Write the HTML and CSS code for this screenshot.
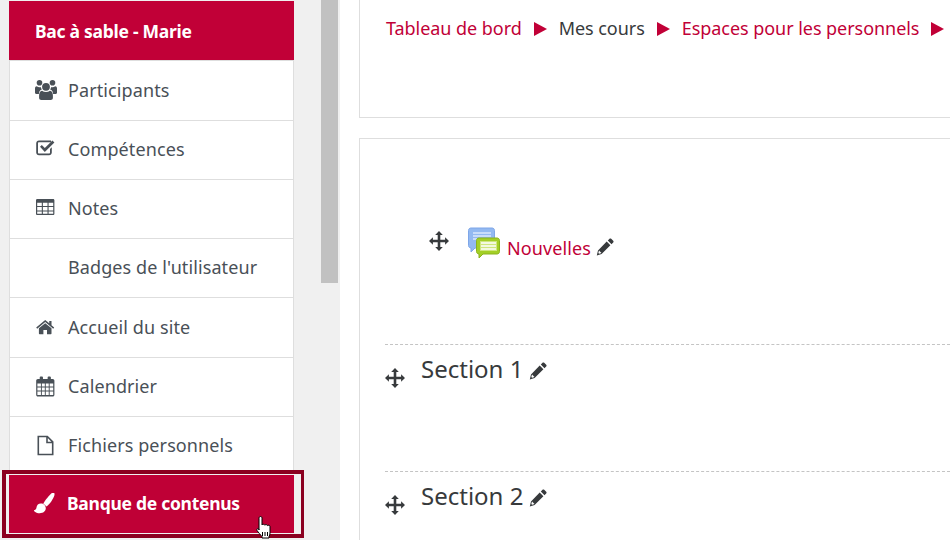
FILE: index.html
```html
<!DOCTYPE html>
<html lang="fr">
<head>
    <meta charset="UTF-8">
    <title>Bac à sable - Marie</title>
    <link rel="stylesheet" href="styles.css">
</head>
<body>
    <div class="page">
        <!-- Course navigation -->
        <nav class="sidebar">
            <a class="nav-head">Bac à sable - Marie</a>
            <a class="nav-item first">
                <svg class="ico" viewBox="0 0 22 22">
                    <circle cx="11" cy="7.800" r="3.900"/><circle cx="4.500" cy="3.800" r="2.800"/><circle cx="17.500" cy="3.800" r="2.800"/>
                    <path d="M0 9.500C0 8 .8 7.200 1.800 7.200c.8.700 1.700 1.100 2.700 1.100.5 0 .9-.1 1.200-.2.200 1 .6 1.800 1.200 2.500C5 11.200 4 12.700 3.900 15H1.200C.5 15 0 14.500 0 13.800zM22 9.500c0-1.500-.8-2.300-1.800-2.300-.8.700-1.700 1.100-2.700 1.100-.5 0-.9-.1-1.200-.2-.2 1-.6 1.800-1.200 2.500 1.900.6 2.900 2.100 3 4.400h2.700c.7 0 1.200-.5 1.200-1.200z"/>
                    <path d="M7 11.700c2.300 1.700 5.700 1.700 8 0 1.900.2 2.900 2.100 2.900 4.800v2.200c0 1.300-1 2.300-2.200 2.300H6.300c-1.200 0-2.200-1-2.200-2.300v-2.200c0-2.700 1-4.600 2.900-4.800z"/>
                </svg>
                <span class="label">Participants</span>
            </a>
            <a class="nav-item">
                <svg class="ico" viewBox="0 0 22 22">
                    <g transform="translate(1 .5)"><path d="M3 1h12v1.800H3c-.6 0-1 .4-1 1V13c0 .6.400 1 1 1h10c.6 0 1-.4 1-1V9.500l1.800-1.800V13c0 1.600-1.200 2.800-2.800 2.800H3C1.400 15.800.2 14.600.2 13V3.800C.2 2.200 1.400 1 3 1z"/><path d="M4 7.200l1.800-1.800 3 3L16.400 1l2 2-9.600 9.500z"/></g>
                </svg>
                <span class="label">Compétences</span>
            </a>
            <a class="nav-item">
                <svg class="ico" viewBox="0 0 22 22">
                    <path transform="translate(1 1) scale(.92 1)" fill-rule="evenodd" d="M1.300 0h17.400c.7 0 1.300.6 1.300 1.300v13.400c0 .7-.6 1.300-1.300 1.300H1.300C.6 16 0 15.400 0 14.700V1.300C0 .6.600 0 1.300 0zm0 3.700V7h5V3.700zm6.200 0V7h5V3.700zm6.200 0V7h5V3.700zM1.300 8.100v3.300h5V8.100zm6.200 0v3.300h5V8.100zm6.200 0v3.300h5V8.100zM1.300 12.500v2.200h5v-2.200zm6.200 0v2.200h5v-2.200zm6.200 0v2.200h5v-2.200z"/>
                </svg>
                <span class="label">Notes</span>
            </a>
            <a class="nav-item">
                <span class="ico"></span>
                <span class="label">Badges de l'utilisateur</span>
            </a>
            <a class="nav-item">
                <svg class="ico" viewBox="0 0 22 22">
                    <g transform="translate(1.200 3) scale(.9)"><path d="M10 3.500L3 9.300V15c0 .4.300.7.700.7h4.300v-4.500h4v4.500h4.300c.4 0 .7-.3.700-.7V9.300z"/><path d="M10 0L0 8.300l1.100 1.300L10 2.200l8.900 7.400L20 8.300l-3-2.500V1h-2.500v2.700z"/></g>
                </svg>
                <span class="label">Accueil du site</span>
            </a>
            <a class="nav-item">
                <svg class="ico" viewBox="0 0 22 22">
                    <path transform="translate(1 .5) scale(.93 1)" fill-rule="evenodd" d="M5 0h1.500c.6 0 1 .4 1 1v1.500h5V1c0-.6.4-1 1-1H15c.6 0 1 .4 1 1v1.500h2c1 0 1.800.8 1.800 1.800v13.900c0 1-.8 1.800-1.800 1.800H2c-1 0-1.800-.8-1.800-1.800V4.300c0-1 .8-1.800 1.800-1.800h2V1c0-.6.4-1 1-1zM1.500 7v3h3.800V7zm4.800 0v3h3.200V7zm4.200 0v3h3.200V7zm4.200 0v3h3.800V7zM1.500 11v3h3.800v-3zm4.800 0v3h3.200v-3zm4.200 0v3h3.200v-3zm4.200 0v3h3.800v-3zM1.500 15v3.500h3.800V15zm4.800 0v3.500h3.200V15zm4.200 0v3.500h3.200V15zm4.200 0v3.500h3.800V15z"/>
                </svg>
                <span class="label">Calendrier</span>
            </a>
            <a class="nav-item">
                <svg class="ico" viewBox="0 0 22 22">
                    <path transform="translate(.500 .500)" fill="none" stroke="#495057" stroke-width="1.600" d="M2.800 1h9l5.400 5.400V19H2.800zM11.500 1v6h5.700"/>
                </svg>
                <span class="label">Fichiers personnels</span>
            </a>
            <div class="nav-focus">
                <a class="nav-active">
                    <svg class="ico" viewBox="0 0 22 22">
                        <g transform="translate(-.5 -1) scale(1.050)"><path d="M18.500.3c1.200 0 1.800 1.200 1.400 2.700-1 3.600-4.500 8.500-7.500 10.800L9.300 11C11.500 7.500 15.500 2 18.500.3z"/><path d="M7 11c2.800 0 4.700 2 4.700 4.500 0 2.800-2.500 4.700-5.700 4.700-2.500 0-4.500-1-6-2.700 1.800-.2 2.500-1 2.800-2.500C3.100 12.500 4.700 11 7 11z"/></g>
                    </svg>
                    <span class="label">Banque de contenus</span>
                    <svg class="cursor" viewBox="0 0 18 24"><path fill="#fff" stroke="#000" d="M5.500 1.500c1 0 1.500.8 1.500 1.700V10c.3-1 2.500-1 2.800.2.500-.9 2.400-.8 2.700.4.600-.7 2.500-.5 2.500 1V18c0 1.500-.5 2.500-1 3.500v1.500H7v-1.500c-1.500-1.500-3.500-4-5-6-.8-1.200.6-2.600 1.800-1.500L4 15V3.200c0-.9.500-1.700 1.500-1.700z"/><path stroke="#000" d="M7.500 17v4M10 17v4M12.500 17v4"/></svg>
                </a>
            </div>
        </nav>

        <!-- Scrollbar of the side panel -->
        <div class="scroll-track"><div class="scroll-thumb"></div></div>

        <main class="content">
            <section class="card crumbs">
                <a class="crumb">Tableau de bord</a>
                <span class="sep"></span>
                <span class="crumb-plain">Mes cours</span>
                <span class="sep"></span>
                <a class="crumb">Espaces pour les personnels</a>
                <span class="sep"></span>
            </section>

            <section class="card course">
                <div class="activity">
                    <svg class="move" viewBox="0 0 20 20"><use href="#move"/></svg>
                    <svg class="forum" viewBox="0 0 32 32">
                        <path fill="#93b9f1" stroke="#7ea6e8" d="M3 1h21c1.500 0 2.500 1 2.500 2.500v15c0 1.500-1 2.500-2.500 2.500H7l-4 4v-4c-1.500-.2-2.500-1-2.500-2.500v-15C.5 2 1.500 1 3 1z"/>
                        <path fill="none" stroke="#dbe8fb" stroke-width="1.300" d="M5 6h18M5 9h18M5 12h5"/>
                        <path fill="#a3cf26" stroke="#8ab31c" d="M11 11h18c1.500 0 2.500 1 2.500 2.500v11c0 1.500-1 2.500-2.500 2.500H15l-4 4v-4c-1.500-.2-2.500-1-2.500-2.500v-11C8.500 12 9.500 11 11 11z"/>
                        <rect x="12" y="14" width="17" height="10" fill="#cfe67f"/>
                        <path fill="none" stroke="#fff" stroke-width="1.300" d="M13 16h15M13 19h15M13 22h15"/>
                    </svg>
                    <a class="activity-name">Nouvelles</a>
                    <svg class="pencil" viewBox="0 0 18 18"><use href="#pencil"/></svg>
                </div>

                <div class="section">
                    <svg class="move" viewBox="0 0 20 20"><use href="#move"/></svg>
                    <h3>Section 1</h3>
                    <svg class="pencil" viewBox="0 0 18 18"><use href="#pencil"/></svg>
                </div>

                <div class="section">
                    <svg class="move" viewBox="0 0 20 20"><use href="#move"/></svg>
                    <h3>Section 2</h3>
                    <svg class="pencil" viewBox="0 0 18 18"><use href="#pencil"/></svg>
                </div>
            </section>
        </main>
    </div>

    <svg class="defs" width="0" height="0">
        <symbol id="move" viewBox="0 0 20 20"><path d="M10 0l3.800 3.900h-2.500v4.800h4.800V6.200L20 10l-3.900 3.800v-2.500h-4.800v4.800h2.500L10 20l-3.800-3.900h2.500v-4.800H3.900v2.500L0 10l3.900-3.800v2.500h4.800V3.900H6.200z"/></symbol>
        <symbol id="pencil" viewBox="0 0 18 18"><path d="M13.500.8c.5-.5 1.200-.5 1.700 0l2 2c.5.5.5 1.200 0 1.700l-1.700 1.700-3.700-3.700zM10.700 3.600l3.700 3.700-8.800 8.800L.8 17.500l1.200-5z"/><path fill="#fff" d="M3 12.500l2.500 2.500-2.400.7-.8-.8z"/></symbol>
    </svg>
</body>
</html>
```

FILE: styles.css
```css
html, body {
    margin: 0;
    height: 100%;
    overflow: hidden;
}
body {
    background: #f0f0f0;
    color: #373a3c;
    font-family: "Noto Sans", sans-serif;
    font-size: 18px;
    letter-spacing: 0.1px;
}
.page {
    display: flex;
    height: 540px;
    overflow: hidden;
}
.defs {
    position: absolute;
}

/* side panel */
.sidebar {
    width: 285px;
    margin: 1px 0 0 9px;
    flex: none;
    display: flex;
    flex-direction: column;
}
.nav-head {
    display: flex;
    align-items: center;
    flex: none;
    height: 59px;
    margin-bottom: 0.25px;
    padding-left: 26px;
    background: #c10037;
    border-bottom: 1px solid #dedede;
    color: white;
    font-size: 17.5px;
    font-weight: 700;
    letter-spacing: -0.28px;
}
.nav-item {
    display: flex;
    align-items: center;
    flex: none;
    box-sizing: border-box;
    height: 59.3px;
    padding-left: 25px;
    background: white;
    color: #495057;
    border: 1px solid #dedede;
    border-top: none;
}
.label {
    margin-bottom: 2px;
}
.first .label {
    margin-bottom: 0;
}
.ico {
    width: 22px;
    height: 22px;
    margin-right: 11px;
    flex: none;
    fill: #495057;
}

/* focused entry, its frame sticks out of the column */
.nav-focus {
    flex: none;
    position: relative;
    margin: -6.35px -10px 0 -7px;
    padding: 1px 7px 1px 3px;
    background: #f0f0f0;
    border: solid #8b0020;
    border-width: 4px 3px 4px 4px;
}
.nav-active {
    display: flex;
    align-items: center;
    position: relative;
    height: 58px;
    padding-left: 25px;
    background: #bf0036;
    color: white;
    font-size: 17.5px;
    font-weight: 700;
    letter-spacing: -0.28px;
}
.nav-active .ico {
    fill: white;
}
.cursor {
    position: absolute;
    left: 246px;
    top: 40px;
    width: 18px;
    height: 24px;
}
.scroll-track {
    width: 17px;
    margin-left: 27px;
    flex: none;
}
.scroll-thumb {
    height: 283px;
    background: #c1c1c1;
}

/* main column */
.content {
    flex: 1;
    margin-left: 2px;
    padding-left: 19px;
    background: white;
    min-width: 0;
    overflow: hidden;
}
.card {
    border: 1px solid #dedede;
    border-right: none;
}
.crumbs {
    display: flex;
    align-items: flex-start;
    height: 119px;
    box-sizing: border-box;
    margin-top: -1px;
    padding: 16px 0 0 26px;
    letter-spacing: -0.05px;
    white-space: nowrap;
}
.crumb, .activity-name {
    color: #c10037;
}
.crumb-plain {
    color: #373a3c;
}
.sep {
    width: 0;
    height: 0;
    margin: 6px 12px 0 12px;
    border-left: 13px solid #c10037;
    border-top: 7.5px solid transparent;
    border-bottom: 7.5px solid transparent;
}
.course {
    margin-top: 20px;
    padding: 0 0 0 25px;
}
.move {
    width: 20px;
    height: 20px;
    fill: #373a3c;
    flex: none;
}
.pencil {
    width: 18px;
    height: 18px;
    fill: #373a3c;
    flex: none;
}
.activity {
    display: flex;
    align-items: flex-start;
    height: 205px;
    padding: 88px 0 0 44px;
    box-sizing: border-box;
}
.activity .move {
    margin-top: 4px;
}
.forum {
    width: 32px;
    height: 32px;
    margin: 0 7px 0 19px;
    flex: none;
}
.activity-name {
    margin: 9px 5px 0 0;
}
.activity .pencil {
    margin-top: 11px;
}
.section {
    display: flex;
    align-items: flex-start;
    height: 127px;
    box-sizing: border-box;
    border-top: 1px dashed #c4c4c4;
    padding-top: 7px;
}
.section .move {
    margin-top: 16px;
}
.section h3 {
    margin: 0 6px 0 16px;
    font-size: 24px;
    font-weight: 400;
    letter-spacing: 0;
    line-height: 34px;
}
.section .pencil {
    margin-top: 10px;
}
```
